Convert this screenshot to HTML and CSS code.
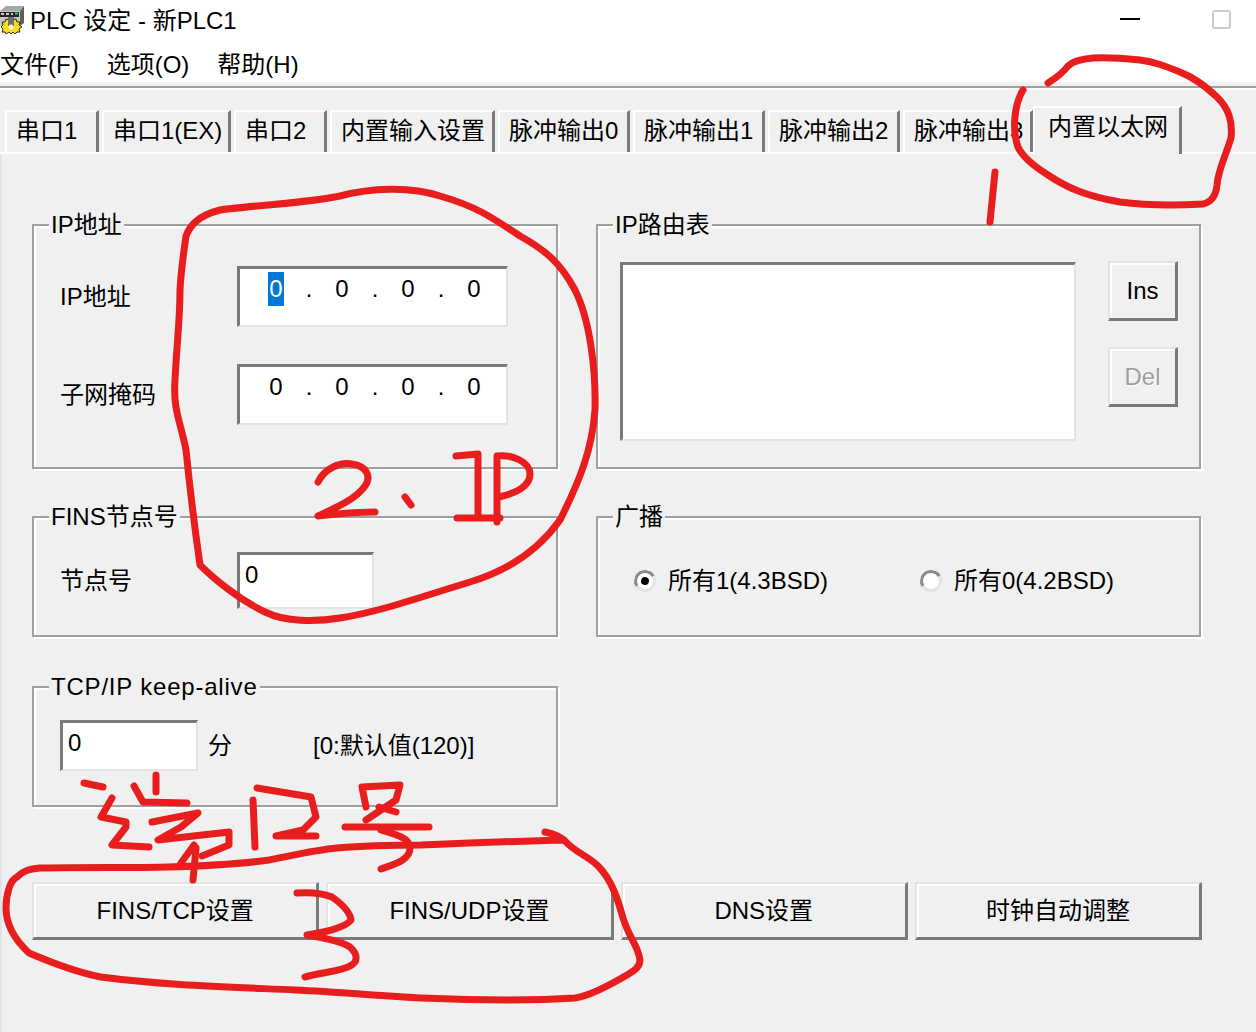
FILE: index.html
```html
<!DOCTYPE html>
<html lang="zh-CN">
<head>
    <meta charset="UTF-8">
    <title>PLC 设定 - 新PLC1</title>
    <link rel="stylesheet" href="styles.css">
</head>
<body>
    <div class="window">
        <header class="titleBar">
            <svg class="appIcon" width="24" height="36" viewBox="0 0 24 36">
                <path d="M0 11 L6 6 H24 L20 11 Z" fill="#a8a8a8"/>
                <path d="M20 11 L24 6 V23 L20 26 Z" fill="#5e5e5e"/>
                <path d="M0 11 H20 V26 H0 Z" fill="#c8c8c8"/>
                <path d="M0 12 H19 V17 H0 Z" fill="#262626"/>
                <path d="M1 14 H4 M6 14 H9 M11 14 H13" stroke="#fff" stroke-width="1.5"/>
                <path d="M15 13.5 H18" stroke="#2fd04a" stroke-width="2"/>
                <path d="M11 18 L13 20 L16 19 L17 22 L20 22 L19 25 L22 27 L19 29 L20 32 L17 32 L15 34 L13 32 L11 34 L9 32 L6 34 L5 32 L2 32 L3 29 L1 27 L3 25 L2 22 L5 22 L6 19 L9 20 Z" fill="#f4dc2a" stroke="#3a3000" stroke-width="1"/>
                <path d="M8 17 H14 V26 H8 Z" fill="#6e6e6e"/>
                <circle cx="11" cy="27" r="2.5" fill="#fff8c0"/>
            </svg>
            <span class="titleText">PLC 设定 - 新PLC1</span>
            <span class="winMin"></span>
            <span class="winMax"></span>
        </header>
        <nav class="menuBar">
            <span>文件(F)</span>
            <span>选项(O)</span>
            <span>帮助(H)</span>
        </nav>
        <div class="sep"></div>

        <div class="tabs">
            <div class="tab tabA">串口1</div>
            <div class="tab tabB">串口1(EX)</div>
            <div class="tab tabC">串口2</div>
            <div class="tab tabD">内置输入设置</div>
            <div class="tab tabE">脉冲输出0</div>
            <div class="tab tabE">脉冲输出1</div>
            <div class="tab tabE">脉冲输出2</div>
            <div class="tab tabF">脉冲输出3</div>
            <div class="tab tabActive">内置以太网</div>
        </div>

        <main class="sheet">
            <div class="groups">
                <section class="group">
                    <span class="groupTitle">IP地址</span>
                    <div class="ipForm">
                        <label>IP地址</label>
                        <div class="field ipField">
                            <span class="ipPart selected">0</span><span class="ipDot">.</span>
                            <span class="ipPart">0</span><span class="ipDot">.</span>
                            <span class="ipPart">0</span><span class="ipDot">.</span>
                            <span class="ipPart">0</span>
                        </div>
                        <label>子网掩码</label>
                        <div class="field ipField">
                            <span class="ipPart">0</span><span class="ipDot">.</span>
                            <span class="ipPart">0</span><span class="ipDot">.</span>
                            <span class="ipPart">0</span><span class="ipDot">.</span>
                            <span class="ipPart">0</span>
                        </div>
                    </div>
                </section>

                <section class="group">
                    <span class="groupTitle">IP路由表</span>
                    <div class="routeBody">
                        <div class="field routeList"></div>
                        <div class="routeBtns">
                            <div class="btn smallBtn">Ins</div>
                            <div class="btn smallBtn disabled">Del</div>
                        </div>
                    </div>
                </section>

                <section class="group">
                    <span class="groupTitle">FINS节点号</span>
                    <div class="nodeRow">
                        <label>节点号</label>
                        <div class="field nodeField">0</div>
                    </div>
                </section>

                <section class="group">
                    <span class="groupTitle">广播</span>
                    <div class="radioRow">
                        <div class="radioItem itemOne"><span class="radio checked"></span>所有1(4.3BSD)</div>
                        <div class="radioItem"><span class="radio"></span>所有0(4.2BSD)</div>
                    </div>
                </section>

                <section class="group keepAlive">
                    <span class="groupTitle keepTitle">TCP/IP keep-alive</span>
                    <div class="keepRow">
                        <div class="field keepField">0</div>
                        <span class="unit">分</span>
                        <span>[0:默认值(120)]</span>
                    </div>
                </section>
            </div>

            <div class="bottomBtns">
                <div class="btn">FINS/TCP设置</div>
                <div class="btn">FINS/UDP设置</div>
                <div class="btn">DNS设置</div>
                <div class="btn">时钟自动调整</div>
            </div>
        </main>

        <!-- hand drawn marks on top of the screenshot -->
        <svg class="marks" width="1256" height="1032" viewBox="0 0 1256 1032">
            <path d="M1023 90 C1014 105 1012 130 1018 147 C1024 160 1040 170 1048 175 C1066 187 1085 196 1120 202 C1150 206 1185 205 1203 204 C1212 202 1216 195 1217 185 C1218 170 1226 155 1231 138 C1233 120 1228 108 1217 97 C1205 86 1195 78 1180 72 C1165 66 1155 62 1140 60 C1120 58 1105 57 1093 58 C1080 59 1072 62 1068 66 C1062 74 1056 78 1048 83"/>
            <path d="M995 172 L990 222"/>
            <path d="M186 236 C190 226 197 216 220 210 C245 206 300 204 340 196 C370 188 410 186 440 196 C475 206 490 216 520 236 C545 250 560 262 575 290 C590 320 596 370 595 410 C592 450 580 480 560 520 C540 548 510 570 470 582 C430 594 380 612 340 618 C315 622 285 622 265 612 C240 600 215 580 200 565 C195 530 190 490 186 450 C180 420 173 410 175 380 C177 340 180 320 180 290 C181 270 184 250 186 236"/>
            <path d="M318 482 C325 468 340 462 352 464 C366 466 372 476 365 486 C355 500 335 508 318 516 C335 514 355 512 375 512"/>
            <path d="M405 497 L411 505"/>
            <path d="M456 456 L478 454 M478 454 L478 518 M457 518 L500 518"/>
            <path d="M497 522 L497 456 C512 454 530 462 530 474 C530 488 512 494 499 497"/>
            <path d="M84 783 L103 787"/>
            <path d="M112 798 L101 817 L126 822 L126 827 L112 845 L149 847"/>
            <path d="M156 775 L156 792"/>
            <path d="M134 786 L143 802 L187 803"/>
            <path d="M152 822 L198 813 L181 827 L158 840 L229 832 L229 845 L202 856"/>
            <path d="M194 845 L181 863 M196 848 L193 880"/>
            <path d="M257 788 L311 797 L316 817 L303 830 L276 836 L316 836"/>
            <path d="M253 800 L255 847"/>
            <path d="M362 787 L400 785 L396 800 L366 820 M362 787 L366 807 M379 807 L396 812"/>
            <path d="M345 827 L429 827"/>
            <path d="M381 830 C395 834 410 838 410 848 C410 860 395 864 381 869"/>
            <path d="M545 832 C555 834 562 838 566 842 C575 852 588 856 598 866 C612 880 618 900 623 918 C630 940 638 945 640 960 C640 968 632 972 627 975 C610 985 590 996 575 998 C530 1001 470 1000 421 998 C380 996 340 992 295 990 C230 987 160 985 101 977 C75 972 50 962 29 953 C15 940 6 925 6 908 C6 895 10 880 17 877 C24 870 30 869 40 868 C90 867 130 868 168 867 C205 866 240 864 269 860 C290 856 315 850 337 848 C360 846 390 845 421 845 C470 843 520 841 564 840"/>
            <path d="M297 893 C310 892 322 893 332 897 C342 904 350 912 351 920 C345 928 325 932 307 935 C325 938 345 942 351 948 C358 955 358 962 350 966 C340 972 320 972 305 977"/>
        </svg>
    </div>
</body>
</html>
```

FILE: styles.css
```css
* {
    box-sizing: border-box;
}

html, body {
    margin: 0;
    padding: 0;
    background-color: #f0f0f0;
}

.window {
    position: relative;
    width: 1256px;
    height: 1032px;
    overflow: hidden;
    font-family: "Liberation Sans", "Noto Sans CJK SC", sans-serif;
    font-size: 24px;
    line-height: 34px;
    color: #000;
}

.titleBar {
    height: 42px;
    background-color: #fff;
    display: flex;
    align-items: center;
}

.appIcon {
    flex: none;
    align-self: flex-start;
    margin-right: 6px;
}

.titleText {
    flex: 1;
}

.winMin {
    width: 20px;
    height: 2px;
    background-color: #000;
    margin-right: 72px;
    margin-top: -4px;
}

.winMax {
    width: 19px;
    height: 19px;
    border: 2px solid #ccc;
    border-radius: 3px;
    margin-right: 25px;
    margin-top: -4px;
}

.menuBar {
    height: 40px;
    background-color: #fff;
    display: flex;
    gap: 28px;
    align-items: center;
    padding-top: 6px;
}

.sep {
    height: 8px;
    padding-top: 4px;
    background-color: #f0f0f0;
    border-bottom: 2px solid #fff;
}

.sep::after {
    content: "";
    display: block;
    height: 2px;
    background-color: #a0a0a0;
}

.tabs {
    height: 64px;
    display: flex;
    align-items: flex-end;
    gap: 3px;
    padding-left: 5px;
    border-bottom: 2px solid #fff;
}

.tab {
    height: 42px;
    flex: none;
    padding: 2px 0 0 9px;
    white-space: nowrap;
    background-color: #f0f0f0;
    border-top: 2px solid #fff;
    border-left: 2px solid #fff;
    border-right: 3px solid #7a7a7a;
}

.tabA { width: 94px; }
.tabB { width: 129px; }
.tabC { width: 93px; }
.tabD { width: 165px; }
.tabE { width: 132px; }
.tabF { width: 130px; }

.tabActive {
    width: 149px;
    height: 48px;
    margin-left: -3px;
    margin-bottom: -2px;
    padding-left: 13px;
    position: relative;
}

.sheet {
    height: 880px;
    padding: 70px 0 0 32px;
    border-left: 2px solid #e3e3e3;
}

.sheet .groups,
.sheet .bottomBtns {
    margin-left: -2px;
}

.groups {
    display: grid;
    grid-template-columns: 526px 605px;
    grid-template-rows: 245px 121px 121px;
    column-gap: 38px;
    row-gap: 47px;
}

.group {
    position: relative;
    border: 2px solid #a0a0a0;
    box-shadow: inset 2px 2px 0 #fff, 2px 2px 0 #fff;
}

.keepAlive {
    margin-top: 2px;
    margin-bottom: -2px;
}

.groupTitle {
    position: absolute;
    top: -18px;
    left: 15px;
    padding: 0 2px;
    background-color: #f0f0f0;
    white-space: nowrap;
}

.keepTitle {
    letter-spacing: 0.8px;
}

label {
    display: block;
}

.field {
    background-color: #fff;
    border-top: 3px solid #7a7a7a;
    border-left: 3px solid #7a7a7a;
    border-right: 2px solid #e3e3e3;
    border-bottom: 2px solid #e3e3e3;
}

.ipForm {
    display: grid;
    grid-template-columns: 177px 271px;
    grid-auto-rows: 61px;
    row-gap: 37px;
    align-items: center;
    padding: 40px 0 0 26px;
}

.ipField {
    height: 61px;
    display: flex;
    align-items: flex-start;
    padding: 3px 0 0 28px;
}

.ipPart {
    width: 16px;
    height: 34px;
    text-align: center;
}

.ipPart.selected {
    background-color: #0078d7;
    color: #fff;
}

.ipDot {
    width: 50px;
    text-align: center;
}

.routeBody {
    display: flex;
    padding: 36px 0 0 22px;
}

.routeList {
    width: 456px;
    height: 179px;
}

.routeBtns {
    display: flex;
    flex-direction: column;
    gap: 26px;
    margin-left: 32px;
    margin-top: -1px;
}

.btn {
    display: flex;
    align-items: center;
    justify-content: center;
    background-color: #f0f0f0;
    border-top: 2px solid #e3e3e3;
    border-left: 2px solid #e3e3e3;
    border-right: 3px solid #7a7a7a;
    border-bottom: 3px solid #7a7a7a;
    box-shadow: inset 2px 2px 0 #fff;
}

.smallBtn {
    width: 70px;
    height: 60px;
}

.disabled {
    color: #a0a0a0;
    text-shadow: 1px 1px 0 #fff;
}

.nodeRow {
    display: grid;
    grid-template-columns: 177px 137px;
    align-items: center;
    padding: 34px 0 0 26px;
}

.nodeField {
    height: 57px;
    padding: 3px 0 0 5px;
}

.radioRow {
    display: flex;
    padding: 46px 0 0 36px;
}

.radioItem {
    display: flex;
    align-items: center;
    gap: 12px;
}

.itemOne {
    width: 286px;
}

.radio {
    position: relative;
    width: 22px;
    height: 22px;
    border-radius: 50%;
    background-color: #fff;
    border: 3px solid;
    border-color: #8a8a8a #e3e3e3 #e3e3e3 #8a8a8a;
    transform: rotate(15deg);
}

.radio.checked::after {
    content: "";
    position: absolute;
    left: 4px;
    top: 4px;
    width: 8px;
    height: 8px;
    border-radius: 50%;
    background-color: #000;
}

.keepRow {
    display: flex;
    align-items: center;
    padding: 32px 0 0 26px;
}

.keepField {
    width: 138px;
    height: 51px;
    padding: 3px 0 0 5px;
    margin-right: 10px;
}

.unit {
    width: 105px;
}

.bottomBtns {
    display: flex;
    gap: 7px;
    margin-top: 77px;
}

.bottomBtns .btn {
    width: 287.3px;
    height: 58px;
}

.marks {
    position: absolute;
    left: 0;
    top: 0;
    pointer-events: none;
}

.marks path {
    fill: none;
    stroke: #e81e1e;
    stroke-width: 7;
    stroke-linecap: round;
    stroke-linejoin: round;
}
```
